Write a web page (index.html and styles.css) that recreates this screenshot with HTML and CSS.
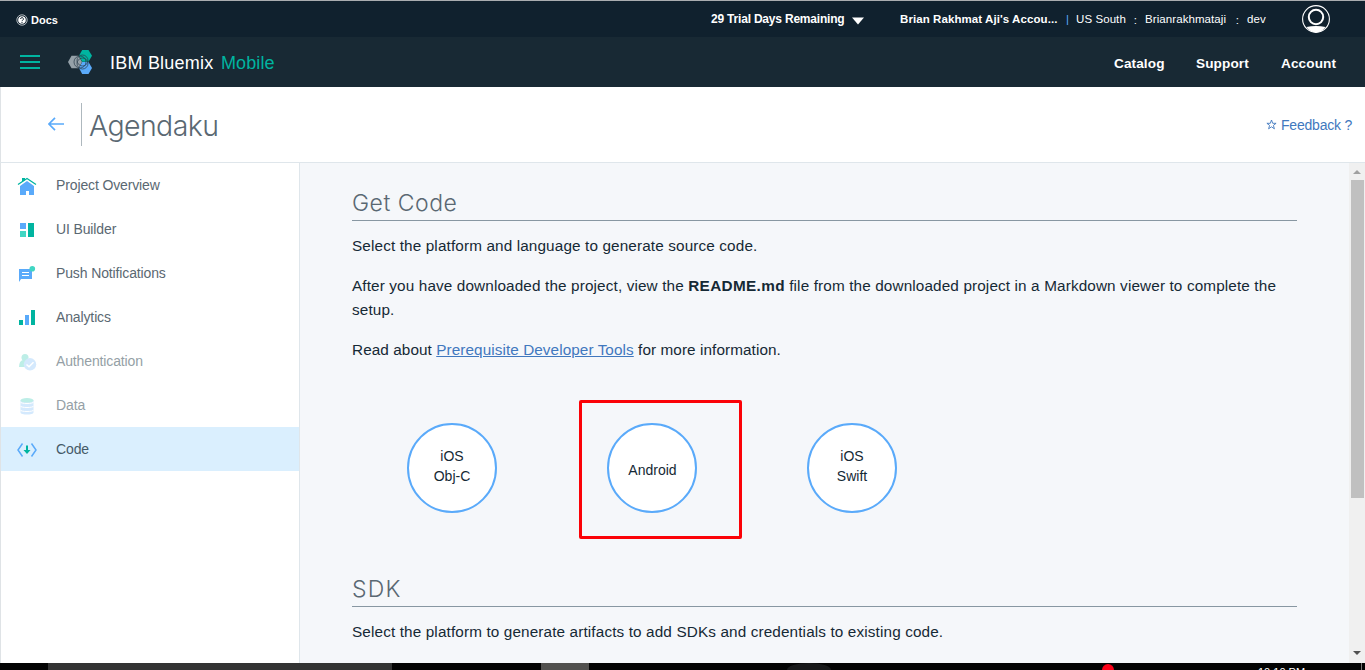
FILE: index.html
```html
<!DOCTYPE html>
<html lang="en">
<head>
<meta charset="utf-8">
<title>IBM Bluemix Mobile</title>
<link rel="stylesheet" href="styles.css">
</head>
<body>
<div class="topbar">
  <a class="docs"><svg width="12" height="12" viewBox="0 0 12 12"><circle cx="6" cy="6" r="5.2" fill="none" stroke="#d5dade" stroke-width=".8"/><circle cx="6" cy="6" r="3.8" fill="#fff"/><path d="M4.6 5a1.4 1.4 0 1 1 2.1 1.2Q6 6.5 6 7.2M6 8v1" fill="none" stroke="#10212e" stroke-width="1"/></svg><span>Docs</span></a>
  <span class="trial">29 Trial Days Remaining</span>
  <svg class="caret" width="12" height="8" viewBox="0 0 12 8"><path d="M0 .5h12L6 7.5z" fill="#fff"/></svg>
  <span class="owner">Brian Rakhmat Aji's Accou...</span>
  <span class="bar">|</span>
  <span class="region">US South</span><span class="colon">:</span><span class="org">Brianrakhmataji</span><span class="colon">:</span><span class="space">dev</span>
  <svg class="avatar" width="28" height="28" viewBox="0 0 28 28"><circle cx="14" cy="14" r="13.4" fill="none" stroke="#fff" stroke-width="1.1"/><circle cx="14" cy="12" r="7.2" fill="none" stroke="#fff" stroke-width="2"/><path d="M4.500 22Q9 21 14 21t9.500 1Q20 27.400 14 27.400T4.500 22z" fill="#fff"/></svg>
</div>
<nav class="nav">
  <svg class="burger" width="20" height="14"><path d="M0 1h20M0 7h20M0 13h20" stroke="#00b4a0" stroke-width="2"/></svg>
  <svg class="logo" width="24" height="24" viewBox="0 0 24 24"><path d="M3.500 5.800h7L14 12l-3.500 6.200h-7L0 12z" fill="#95a1a9"/><path d="M14.200 0h6.300L24 5.800l-3.500 6h-6.300L11 5.800z" fill="#00b4a0"/><path d="M14.200 12h6.300l3.500 6-3.500 6h-6.300L11 18z" fill="#5aaafa"/><g fill="none" stroke="#263a48" stroke-width=".7"><circle cx="12" cy="12" r="6"/><circle cx="14.500" cy="10.500" r="5.500"/><circle cx="14.500" cy="13.500" r="5.500"/></g></svg>
  <span class="brand">IBM Bluemix</span><span class="product">Mobile</span>
  <span class="catalog">Catalog</span><span class="support">Support</span><span class="account">Account</span>
</nav>
<header class="head">
  <svg class="back" width="16" height="14" viewBox="0 0 16 14"><path d="M16 7H1M7 .8L.9 7 7 13.200" fill="none" stroke="#5aaafa" stroke-width="1.700"/></svg>
  <h1>Agendaku</h1>
  <a class="feedback"><svg width="11" height="11" viewBox="0 0 11 11"><path d="M5.500 1l1.200 3.300h3.400L7.400 6.400l1 3.400-2.900-2-2.900 2 1-3.400L.9 4.300h3.400z" fill="none" stroke="#4178be" stroke-width=".9"/></svg><span>Feedback ?</span></a>
</header>
<div class="main">
  <aside class="side">
    <a class="item"><svg width="20" height="20" viewBox="0 0 20 20"><path d="M3 10l7-5 7 5v9h-5v-4H9v4H3z" fill="#5aaafa"/><path d="M1 8.500L10 2.500l9 6" fill="none" stroke="#00b4a0" stroke-width="1.300"/><path d="M5 2h3v2L5 6z" fill="#00b4a0"/></svg><span>Project Overview</span></a>
    <a class="item"><svg width="20" height="20" viewBox="0 0 20 20"><path d="M3 3h6v6H3z" fill="#5aaafa"/><path d="M3 11h6v6H3z" fill="#41d6c3"/><path d="M11 3h6v14h-6z" fill="#00b4a0"/></svg><span>UI Builder</span></a>
    <a class="item"><svg width="20" height="20" viewBox="0 0 20 20"><path d="M2 5h13v10H4l-2 3z" fill="#5aaafa"/><path d="M5 8.500h7M5 11.500h7" stroke="#fff"/><circle cx="15.300" cy="4.700" r="2.800" fill="#41d6c3"/></svg><span>Push Notifications</span></a>
    <a class="item"><svg width="20" height="20" viewBox="0 0 20 20"><path d="M2 12h4v5H2zM14 2h4v15h-4z" fill="#00b4a0"/><path d="M8 7h4v10H8z" fill="#5aaafa"/></svg><span>Analytics</span></a>
    <a class="item off"><svg width="20" height="20" viewBox="0 0 20 20"><circle cx="8" cy="5.500" r="3.500" fill="#bdeee7"/><path d="M2 15q0-6 4-7h4v7z" fill="#bdeee7"/><circle cx="13" cy="12.300" r="6.200" fill="#d4e9fd"/><path d="M9.500 12.500l2.500 2.300 4.500-4.600" fill="none" stroke="#fff" stroke-width="1.500"/></svg><span>Authentication</span></a>
    <a class="item off"><svg width="20" height="20" viewBox="0 0 20 20"><path d="M3.500 4v12.500c0 2.700 13 2.700 13 0V4z" fill="#d4e9fd"/><ellipse cx="10" cy="4.300" rx="6.500" ry="2.300" fill="#bdeee7"/><path d="M3.500 6c0 2 13 2 13 0M3.500 10c0 2 13 2 13 0M3.500 14c0 2 13 2 13 0" fill="none" stroke="#fff"/></svg><span>Data</span></a>
    <a class="item on"><svg width="20" height="20" viewBox="0 0 20 20"><path d="M5.500 3.500L1 10l4.500 6.500M14.500 3.500L19 10l-4.500 6.500" fill="none" stroke="#5aaafa" stroke-width="1.500"/><path d="M9 5.500h2V10h2.500L10 14l-3.500-4H9z" fill="#00b4a0"/></svg><span>Code</span></a>
  </aside>
  <main class="content">
    <h2 class="h-code">Get Code</h2>
    <p class="p1">Select the platform and language to generate source code.</p>
    <p class="p2"><span>After you have downloaded the project, view the <b>README.md</b> file from the downloaded project in a Markdown viewer to complete the</span><br><span>setup.</span></p>
    <p class="p3">Read about <a class="link">Prerequisite Developer Tools</a> for more information.</p>
    <div class="platforms">
      <div class="cell"><div class="disc"><span>iOS<br>Obj-C</span></div></div>
      <div class="cell picked"><div class="disc one"><span>Android</span></div></div>
      <div class="cell"><div class="disc"><span>iOS<br>Swift</span></div></div>
    </div>
    <h2 class="h-sdk">SDK</h2>
    <p class="p4">Select the platform to generate artifacts to add SDKs and credentials to existing code.</p>
  </main>
  <div class="scroll"><i class="up"></i><i class="thumb"></i><i class="down"></i></div>
</div>
<footer class="task"><i class="search"></i><i class="active"></i><i class="shade"></i><i class="dot"></i><span class="clock">10:10 PM</span><i class="peek"></i></footer>
</body>
</html>
```
FILE: styles.css
```css
* { box-sizing: border-box; }
html, body { margin: 0; height: 670px; overflow: hidden; }
body { display: flex; flex-direction: column; font: 14px "Liberation Sans", Arial, sans-serif; color: #152935; background: #fff; }
svg { display: block; flex: none; }
span { white-space: nowrap; }
h1, h2, p { margin: 0; white-space: nowrap; }

.topbar { height: 37px; flex: none; border-top: 1px solid #aaadb0; background: #10212e; display: flex; align-items: center; color: #fff; font-size: 11.5px; letter-spacing: .08px; padding-left: 16px; }
.docs { display: flex; gap: 3px; font-weight: 700; width: 695px; font-size: 11px; letter-spacing: 0; padding-top: 1px; }
.trial { font-weight: 700; font-size: 12px; letter-spacing: -.2px; width: 141px; }
.caret { margin-top: 3px; }
.owner { font-weight: 700; width: 166px; margin-left: 36px; }
.bar { color: #5aaafa; width: 10px; }
.region { width: 50px; }
.colon { width: 19px; text-align: center; padding-top: 1px; }
.org { width: 83px; }
.space { width: 19px; }
.avatar { margin-left: 36px; }

.nav { height: 50px; flex: none; background: #182934; display: flex; align-items: center; color: #fff; padding-left: 20px; }
.nav span { padding-top: 2px; }
.logo { margin-left: 28px; }
.brand { font-size: 18px; letter-spacing: .22px; margin-left: 18px; width: 111px; }
.product { font-size: 18px; letter-spacing: .1px; color: #00b4a0; width: 893px; }
.catalog, .support, .account { font-weight: 700; font-size: 13.6px; letter-spacing: .1px; }
.catalog { width: 82px; }
.support { width: 85px; }

.head { height: 76px; flex: none; border-bottom: 1px solid #dfe6eb; border-left: 1px solid #dfe3e6; display: flex; align-items: center; padding-left: 47px; }
.back { margin-top: -2px; }
h1 { border-left: 1px solid #aeb8be; height: 43px; line-height: 46px; margin-left: 17px; padding-left: 7px; font-size: 28.5px; letter-spacing: -.6px; font-weight: 300; font-family: Inter, "Liberation Sans", sans-serif; color: #5a6872; width: 1185px; }
.feedback { color: #4178be; display: flex; align-items: center; gap: 4px; letter-spacing: -.2px; }

.main { flex: 1; display: flex; min-height: 0; }
.side { width: 300px; flex: none; border-left: 1px solid #dfe3e6; border-right: 1px solid #dfe6eb; }
.item { display: flex; align-items: center; height: 44px; padding-left: 16px; gap: 19px; color: #5a6872; letter-spacing: -.13px; }
.item svg { margin-top: 1px; }
.off { color: #959fa6; }
.on { background: #daeffe; color: #455a68; }

.content { flex: 1; background: #f5f7fa; padding: 24px 52px 0; font-size: 15.3px; min-width: 0; }
h2 { font: 300 23px/32px Inter, "Liberation Sans", sans-serif; letter-spacing: .5px; color: #5a6872; height: 34px; border-bottom: 1px solid #8897a2; }
p { line-height: 24px; letter-spacing: .13px; }
b { letter-spacing: .35px; }
.p1 { margin-top: 13px; }
.p2, .p3 { margin-top: 16px; }
.p3 { letter-spacing: .08px; }
.link { color: #4178be; text-decoration: underline; }
.platforms { display: flex; gap: 37px; margin: 38px 0 0 27px; }
.cell { width: 163px; height: 139px; border: 3px solid transparent; border-radius: 2px; padding: 20px 25px; }
.picked { border-color: #fb0207; }
.disc { width: 90px; height: 90px; border-radius: 50%; border: 2px solid #5aaafa; background: #fff; display: flex; align-items: center; justify-content: center; text-align: center; font-size: 14px; line-height: 20px; padding-bottom: 5px; }
.one { padding: 4px 0 0 1px; }
.h-sdk { margin-top: 34px; letter-spacing: 1.2px; }
.p4 { margin-top: 13px; }

.scroll { width: 16px; flex: none; background: #f0f0f0; display: flex; flex-direction: column; align-items: center; padding: 7px 0 8px; }
.up { border: 4px solid transparent; border-top: 0; border-bottom-color: #a0a0a0; margin-bottom: 6px; }
.thumb { width: 13px; height: 318px; background: #c0c0c0; }
.down { border: 4px solid transparent; border-bottom: 0; border-top-color: #505050; margin-top: auto; }

.task { height: 7px; flex: none; background: #030303; display: flex; overflow: hidden; }
.search { width: 344px; margin-left: 48px; background: #333; }
.active { width: 48px; margin-left: 149px; background: #51504e; }
.shade { width: 44px; height: 14px; margin-left: 198px; border-radius: 50%; background: #171819; }
.dot { width: 12px; height: 12px; margin: 1px 0 0 271px; border-radius: 50%; background: #fb0018; }
.clock { color: #fff; font-size: 11px; line-height: 12px; margin: 3px 0 0 144px; width: 103px; }
.peek { width: 1px; background: #777; }
```
